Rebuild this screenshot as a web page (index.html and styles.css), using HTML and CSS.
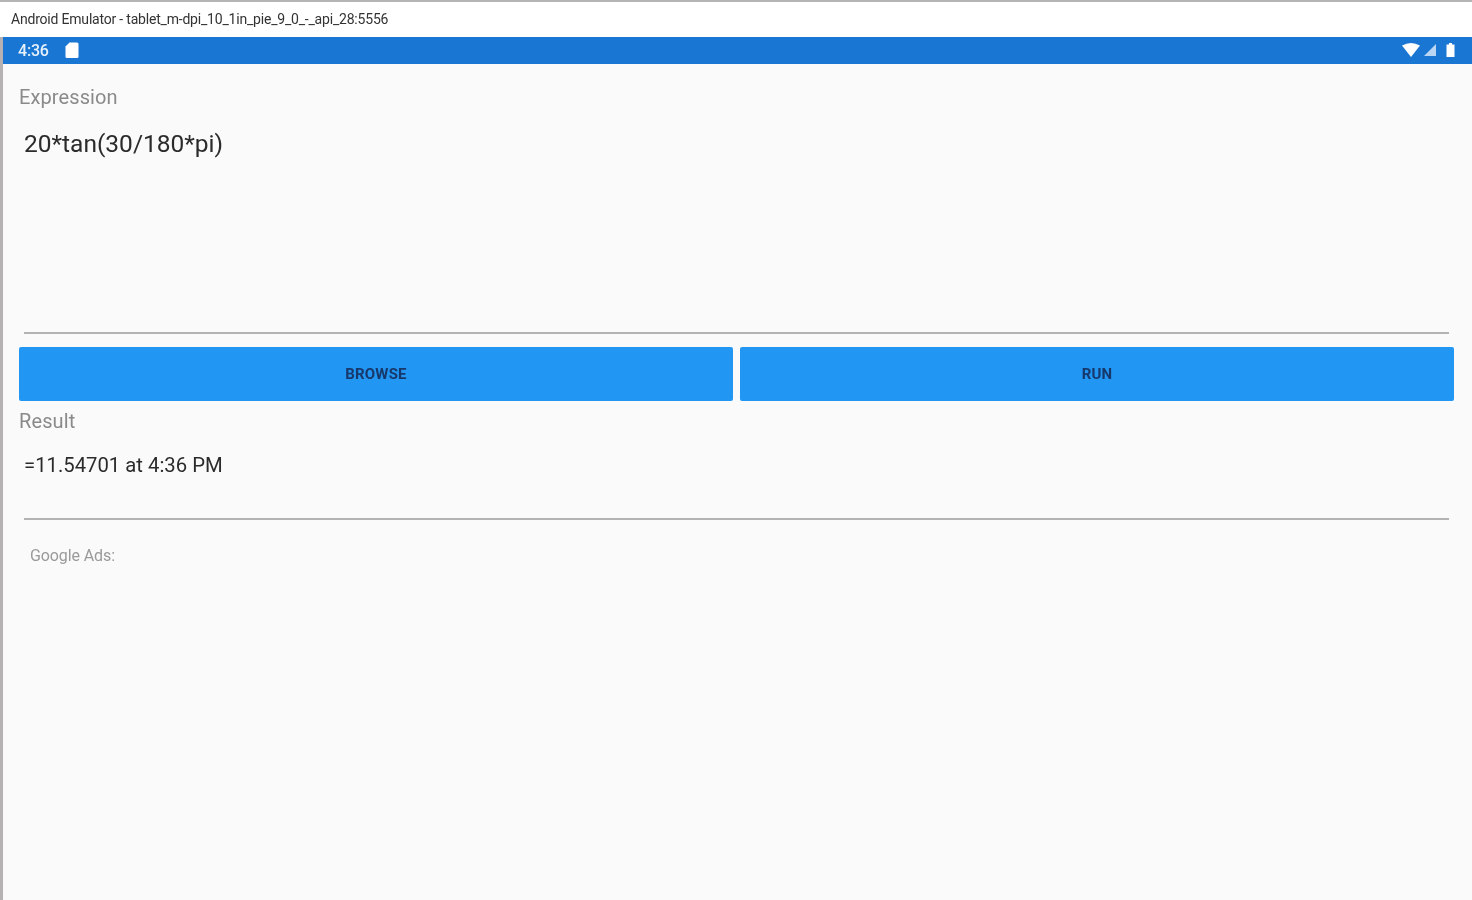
FILE: index.html
```html
<!DOCTYPE html>
<html lang="en">
<head>
<meta charset="utf-8">
<title>Android Emulator</title>
<link rel="stylesheet" href="styles.css">
</head>
<body>
<div class="window">
  <div class="titlebar">Android Emulator - tablet_m-dpi_10_1in_pie_9_0_-_api_28:5556</div>
  <div class="statusbar">
    <div class="status-left">
      <span class="clock">4:36</span>
      <svg class="sd" width="14" height="16" viewBox="0 0 14 16"><path d="M4.500 0.500H12a1.500 1.500 0 0 1 1.500 1.500v12.500a1.500 1.500 0 0 1-1.500 1.500H2a1.500 1.500 0 0 1-1.500-1.500V4.500z" fill="#fff"/></svg>
    </div>
    <div class="status-right">
      <svg class="wifi" width="18" height="14" viewBox="0 0 18 14"><path d="M0 2.500Q9-2.500 18 2.500L9 14z" fill="#fff"/></svg>
      <svg class="signal" width="13" height="13" viewBox="0 0 13 13"><path d="M12 1V13H0z" fill="#fff" opacity=".7"/></svg>
      <svg class="battery" width="9" height="14" viewBox="0 0 9 14"><path d="M3 0H6V1.500H8.500V14H.5V1.500H3z" fill="#fff"/></svg>
    </div>
  </div>
  <main class="app">
    <div class="label label-expression">Expression</div>
    <div class="field field-expression">20*tan(30/180*pi)</div>
    <div class="buttons">
      <button class="btn">BROWSE</button>
      <button class="btn">RUN</button>
    </div>
    <div class="label label-result">Result</div>
    <div class="field field-result">=11.54701 at 4:36 PM</div>
    <div class="ads">Google Ads:</div>
  </main>
</div>
</body>
</html>
```
FILE: styles.css
```css
* { box-sizing: border-box; }
html, body { margin: 0; height: 100%; overflow: hidden; }
body { font-family: Roboto, "Liberation Sans", sans-serif; background: #fafafa; }
.window { height: 900px; display: flex; flex-direction: column; border-left: 3px solid #b5b0b2; filter: blur(.6px); }
.titlebar {
  height: 37px; margin-left: -3px; padding: 12px 0 0 11px;
  background: #fff; border-top: 2px solid #b4b4b4;
  font-size: 14px; line-height: 11px; letter-spacing: -.2px; color: #333; white-space: nowrap;
}
.statusbar {
  height: 27px; background: #1976d2; color: #fff;
  display: flex; justify-content: space-between; align-items: center;
  padding: 0 17px 0 15px;
}
.status-left { display: flex; align-items: center; gap: 16px; }
.clock { font-size: 16px; font-weight: 500; letter-spacing: -.2px; color: #e6f1fb; }
.sd { display: block; margin-top: -2px; }
.status-right { display: flex; align-items: center; gap: 4px; margin-top: -2px; }
.status-right svg { display: block; }
.battery { margin-left: 5px; }
.app { flex: 1; background: #fafafa; padding: 0 18px 0 16px; }
.label { font-size: 20px; line-height: 22px; letter-spacing: .1px; color: #8a8a8a; }
.label-expression { padding-top: 22px; height: 44px; }
.field { margin: 0 5px; border-bottom: 2px solid #b3b3b3; color: #2b2b2b; white-space: nowrap; }
.field-expression { height: 226px; padding-top: 21px; font-size: 24.5px; line-height: 30px; }
.field-result { height: 88px; padding-top: 21px; font-size: 20.300px; line-height: 24px; }
.buttons { display: grid; grid-template-columns: 1fr 1fr; gap: 7px; margin-top: 13px; }
.btn {
  height: 54px; border: 0; border-radius: 2px; padding: 0;
  background: #2196f3; color: #17386b;
  font: 700 15px/1 Roboto, "Liberation Sans", sans-serif; letter-spacing: .2px;
}
.label-result { margin-top: 9px; }
.ads { margin: 27px 0 0 11px; font-size: 16px; line-height: 18px; letter-spacing: -.1px; color: #9a9a9a; }
```
